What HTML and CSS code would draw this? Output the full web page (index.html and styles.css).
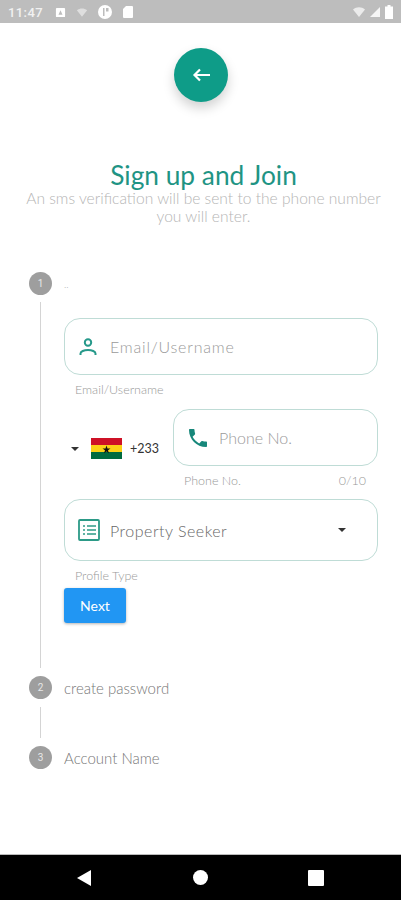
FILE: index.html
```html
<!DOCTYPE html>
<html lang="en">
<head>
  <meta charset="UTF-8">
  <meta name="viewport" content="width=device-width, initial-scale=1.0">
  <title>Sign up and Join</title>
  <link rel="stylesheet" href="styles.css">
</head>
<body>
<div class="phone">
  <!-- Status bar -->
  <div class="status-bar">
    <span class="clock">11:47</span>
    <svg class="status-icon" width="11" height="11" viewBox="0 0 12 12"><path fill="#fff" fill-rule="evenodd" d="M2 1h8a1 1 0 0 1 1 1v8a1 1 0 0 1-1 1H2a1 1 0 0 1-1-1V2a1 1 0 0 1 1-1zm4 2.500L3.800 8.500h4.400z"/></svg>
    <svg class="status-icon dim" width="12" height="11" viewBox="0 0 14 12"><path fill="#fff" d="M1 3.500C4.500.5 9.500.5 13 3.500L7 11z"/></svg>
    <svg class="status-icon" width="14" height="14" viewBox="0 0 14 14"><path fill="#fff" fill-rule="evenodd" d="M7 0a7 7 0 1 1 0 14A7 7 0 0 1 7 0zM5 3v8h1.500V3zm3 0v3.500h2.500V3z"/></svg>
    <svg class="status-icon" width="12" height="14" viewBox="0 0 12 14"><path fill="#fff" d="M4 1h6a1 1 0 0 1 1 1v10a1 1 0 0 1-1 1H2a1 1 0 0 1-1-1V4z"/></svg>
    <span class="status-right">
      <svg width="14" height="12" viewBox="0 0 14 12"><path fill="#fff" opacity=".7" d="M1 3.500C4.500.5 9.500.5 13 3.500L7 11z"/></svg>
      <svg width="12" height="12" viewBox="0 0 12 12"><path fill="#fff" opacity=".85" d="M11 1v10H1z"/></svg>
      <svg width="10" height="14" viewBox="0 0 10 14"><path fill="#fff" d="M3.500 0h3v1.500H9V14H1V1.500h2.500z"/></svg>
    </span>
  </div>

  <main class="content">
    <button class="back-fab" aria-label="Back">
      <svg width="20" height="20" viewBox="0 0 20 20"><path fill="none" stroke="#fff" stroke-width="2.200" d="M19 10H3M9 4.500L3.500 10 9 15.500"/></svg>
    </button>

    <div class="intro">
      <h1 class="title">Sign up and Join</h1>
      <p class="subtitle">An sms verification will be sent to the phone number you will enter.</p>
    </div>

    <div class="stepper">
      <div class="step-head">
        <span class="step-num">1</span>
        <span class="step-label tiny">..</span>
      </div>
      <div class="step-body">
        <div class="field">
          <svg class="field-icon" width="24" height="24" viewBox="0 0 24 24"><g fill="none" stroke="#26998a" stroke-width="2"><circle cx="11" cy="7.500" r="3.200"/><path d="M3.500 20v-1.500c0-2 3.500-3.500 7.500-3.500s7.500 1.500 7.500 3.500V20"/></g></svg>
          <span class="field-text wide">Email/Username</span>
        </div>
        <div class="helper">Email/Username</div>

        <div class="phone-row">
          <div class="country">
            <span class="caret"></span>
            <svg class="flag" width="31" height="21" viewBox="0 0 31 21"><rect width="31" height="7" fill="#ce1126"/><rect y="7" width="31" height="7" fill="#fcd116"/><rect y="14" width="31" height="7" fill="#006b3f"/><path fill="#111" d="M15.500 7.500l1 3h3l-2.500 1.800 1 3-2.500-1.900-2.500 1.900 1-3-2.500-1.800h3z"/></svg>
            <span class="dial">+233</span>
          </div>
          <div class="phone-col">
            <div class="field">
              <svg class="field-icon" width="24" height="24" viewBox="0 0 24 24"><path fill="#17877a" d="M6.600 10.800c1.400 2.800 3.800 5.100 6.600 6.600l2.200-2.200c.3-.3.700-.4 1-.2 1.100.4 2.300.6 3.600.6.600 0 1 .4 1 1V20c0 .6-.4 1-1 1C10.600 21 3 13.400 3 4c0-.6.400-1 1-1h3.500c.6 0 1 .4 1 1 0 1.300.2 2.500.6 3.600.1.300 0 .7-.2 1z"/></svg>
              <span class="field-text">Phone No.</span>
            </div>
            <div class="helper helper-split"><span>Phone No.</span><span>0/10</span></div>
          </div>
        </div>

        <div class="field field-select">
          <svg class="field-icon" width="24" height="24" viewBox="0 0 24 24"><rect x="2" y="2" width="20" height="20" rx="1" fill="none" stroke="#2c9a87" stroke-width="1.800"/><path stroke="#2c9a87" stroke-width="1.500" d="M6 8h2M10 8h9M6 12h2M10 12h9M6 16h2M10 16h9"/></svg>
          <span class="field-text dark">Property Seeker</span>
          <span class="caret"></span>
        </div>
        <div class="helper helper-last">Profile Type</div>

        <button class="next-btn">Next</button>
      </div>

      <div class="step-head">
        <span class="step-num">2</span>
        <span class="step-label">create password</span>
      </div>
      <div class="step-body short"></div>
      <div class="step-head">
        <span class="step-num">3</span>
        <span class="step-label">Account Name</span>
      </div>
    </div>
  </main>

  <!-- Nav bar -->
  <div class="nav-bar">
    <svg width="16" height="18" viewBox="0 0 16 18"><path fill="#fff" d="M15 1v16L1 9z"/></svg>
    <span class="nav-home"></span>
    <span class="nav-square"></span>
  </div>
</div>
</body>
</html>
```

FILE: styles.css
```css
*, *::before, *::after { box-sizing: border-box; }
body { margin: 0; background: #fff; font-family: Lato, "Open Sans", sans-serif; color: #666; }
.phone { width: 401px; height: 900px; display: flex; flex-direction: column; overflow: hidden; }

.status-bar { height: 23px; flex: none; background: #bdbdbd; display: flex; align-items: center; gap: 10px; padding: 1px 7px 0 8px; color: #f1f1f1; }
.clock { font: 500 13px Roboto, sans-serif; letter-spacing: .4px; margin-right: 2px; }
.status-icon { display: block; }
.status-icon.dim { opacity: .5; }
.status-right { margin-left: auto; display: flex; align-items: center; gap: 3px; }

.content { flex: 1; display: flex; flex-direction: column; align-items: center; padding-top: 25px; }
.back-fab { width: 54px; height: 54px; flex: none; border: 0; border-radius: 50%; background: #0e9c88; box-shadow: 0 6px 12px rgba(0,0,0,.18); display: flex; align-items: center; justify-content: center; padding: 0; }
.intro { align-self: stretch; padding-left: 6px; }
.title { margin: 59px 0 0; font-size: 26.3px; line-height: 28px; font-weight: 400; color: #1f9484; text-align: center; }
.subtitle { margin: 0 auto; width: 372px; font-size: 15.6px; line-height: 18px; font-weight: 300; color: #b5b5b5; text-align: center; }

.stepper { align-self: stretch; padding: 47px 23px 0 29px; }
.step-head { display: flex; align-items: center; gap: 12px; height: 23px; }
.step-num { width: 23px; height: 23px; flex: none; border-radius: 50%; background: #9e9e9e; color: #e8e8e8; font: 10px/23px Roboto, sans-serif; text-align: center; }
.step-label { font-size: 15px; font-weight: 300; color: #777; }
.step-label.tiny { font-size: 10px; color: #aaa; }
.step-body { margin: 7px 0 8px 11px; border-left: 1px solid #d4d4d4; padding: 16px 0 45px 23px; }
.step-body.short { height: 31px; margin-top: 8px; padding: 0; }

.field { height: 57px; display: flex; align-items: center; gap: 9px; padding: 0 12px; border: 1px solid #bfdcd6; border-radius: 16px; }
.field-text { font-size: 16px; font-weight: 300; color: #9a9a9a; }
.field-text.wide { letter-spacing: .8px; }
.field-text.dark { color: #666; letter-spacing: .5px; }
.helper { padding: 8px 0 0 11px; height: 34px; font-size: 12.5px; line-height: 14px; font-weight: 300; color: #999; }
.helper-split { display: flex; justify-content: space-between; padding-right: 12px; height: 33px; }
.helper-last { height: 27px; }

.phone-row { display: flex; }
.country { width: 109px; flex: none; height: 57px; display: flex; align-items: center; padding: 22px 0 0 7px; }
.flag { margin-left: 12px; display: block; }
.dial { margin-left: 8px; font-size: 12.5px; color: #333; font-weight: 400; }
.phone-col { flex: 1; }
.caret { width: 0; height: 0; border: 4px solid transparent; border-top: 4px solid #333; border-bottom: 0; flex: none; }
.field-select { height: 62px; }
.field-select .caret { margin: 0 19px 0 auto; }

.next-btn { display: block; width: 62px; height: 35px; border: 0; border-radius: 3px; background: #2196f3; box-shadow: 0 1px 3px rgba(0,0,0,.3); color: #fff; font: 14px Lato, sans-serif; }

.nav-bar { height: 46px; flex: none; background: #000; border-top: 1px solid #bbb; display: flex; align-items: center; justify-content: space-between; padding: 0 77px 0 76px; }
.nav-bar svg { display: block; }
.nav-home { width: 15px; height: 15px; border-radius: 50%; background: #fff; }
.nav-square { width: 16px; height: 16px; border-radius: 1px; background: #fff; }
```
